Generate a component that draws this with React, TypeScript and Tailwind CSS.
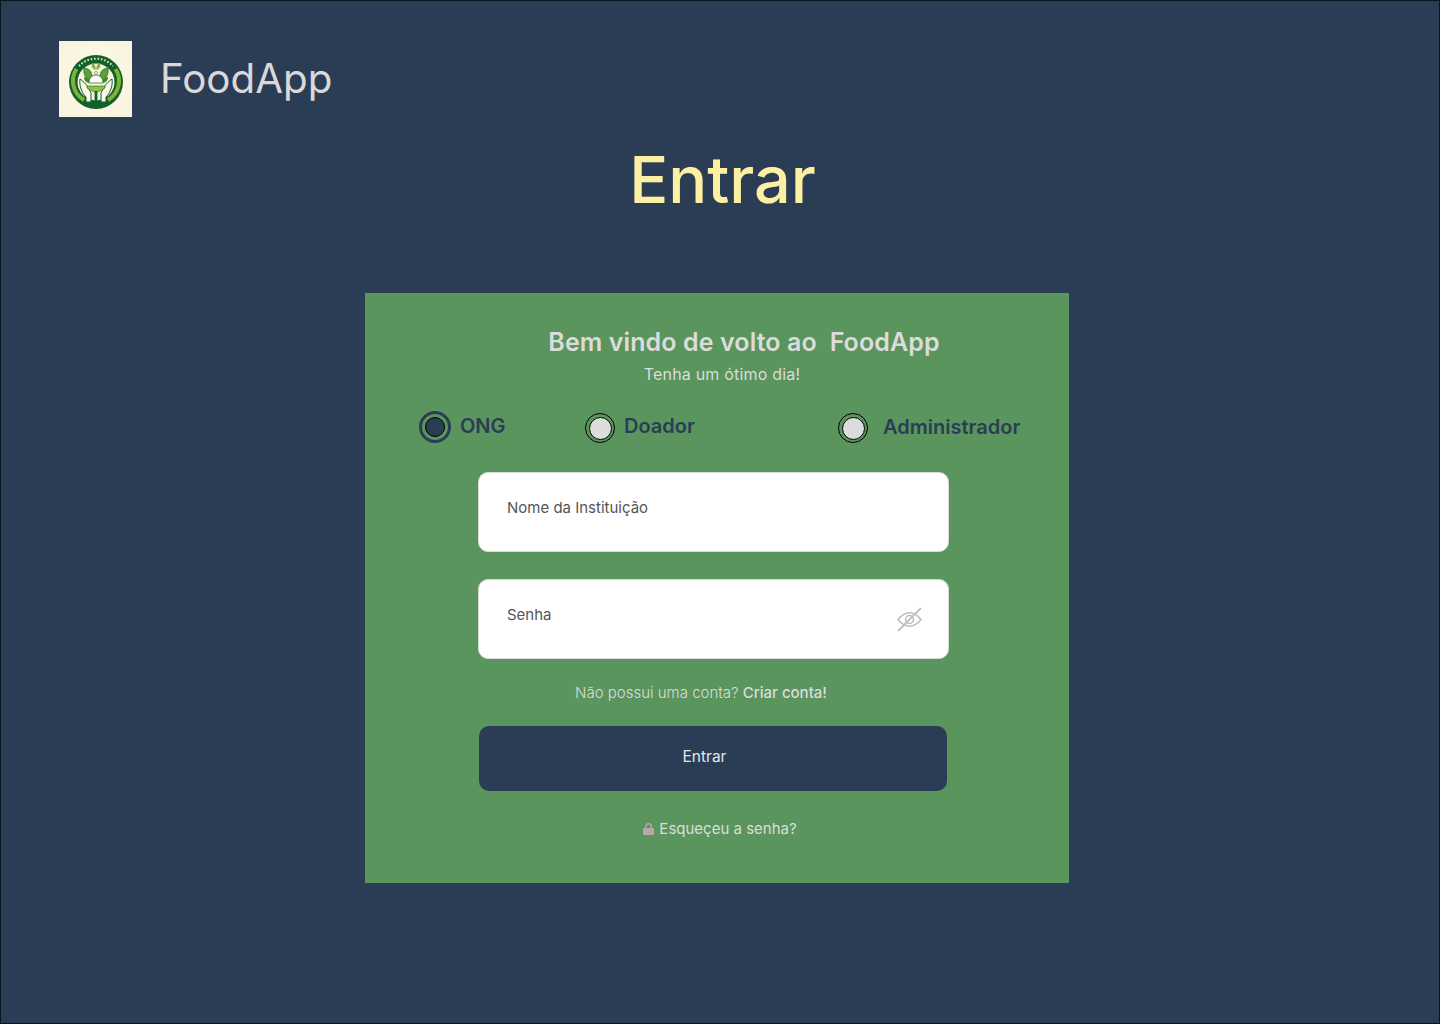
const font = { body: "font-['Inter',sans-serif]" };

function Logo() {
  return (
    <div className="flex h-[76px] w-[73px] shrink-0 items-center justify-center bg-[radial-gradient(circle,#fdfaea,#f8f3db)] pt-[5px]">
      <svg width="54" height="54" viewBox="0 0 54 54">
        <circle cx="27" cy="27" r="27" fill="#12602c" />
        <path d="M10 11 A23.3 23.3 0 0 1 44 11" fill="none" stroke="#e8e6c0" strokeWidth="2" strokeDasharray="1.6 1.8" />
        <path d="M7.5 14 A22 22 0 0 0 15 45" fill="none" stroke="#7fb239" strokeWidth="4" />
        <path d="M46.5 14 A22 22 0 0 1 39 45" fill="none" stroke="#7fb239" strokeWidth="4" />
        <circle cx="27" cy="27" r="18.5" fill="#f7f5de" />
        <path d="M15 13 C21 13 24 18 23 25 C17 25 14 20 15 13 Z" fill="#5f9f33" stroke="#12602c" strokeWidth="0.6" />
        <path d="M39 13 C33 13 30 18 31 25 C37 25 40 20 39 13 Z" fill="#5f9f33" stroke="#12602c" strokeWidth="0.6" />
        <path d="M23 8 C26 9 27 12 26.5 15 C23.5 14 22 11 23 8 Z" fill="#7fb239" />
        <path d="M31 8 C28 9 27 12 27.5 15 C30.5 14 32 11 31 8 Z" fill="#7fb239" />
        <path d="M15 22 C19 22 21 25 21 28 C17 28 15 25 15 22 Z" fill="#3f8a2c" />
        <path d="M39 22 C35 22 33 25 33 28 C37 28 39 25 39 22 Z" fill="#3f8a2c" />
        <path d="M20 27 A7 7 0 0 1 34 27 L34 28 H20 Z" fill="#fffef4" stroke="#12602c" strokeWidth="0.7" />
        <rect x="25.5" y="16.5" width="3" height="3" rx="1.5" fill="#fffef4" stroke="#12602c" strokeWidth="0.5" />
        <path d="M11 24 C14 26 17 29 19 32 L22 38 L22 47 L17 47 L17 42 C13 38 10 31 11 24 Z" fill="#fbf8e6" stroke="#12602c" strokeWidth="1" />
        <path d="M43 24 C40 26 37 29 35 32 L32 38 L32 47 L37 47 L37 42 C41 38 44 31 43 24 Z" fill="#fbf8e6" stroke="#12602c" strokeWidth="1" />
        <path d="M18 31 H36 L36 33 L29 37 H25 L18 33 Z" fill="#8cc63f" stroke="#12602c" strokeWidth="0.6" />
        <rect x="25.6" y="36" width="2.8" height="13" fill="#12602c" />
      </svg>
    </div>
  );
}

function Radio({ checked, label, labelClass, className }: { checked?: boolean; label: string; labelClass: string; className: string }) {
  return (
    <label className={`flex items-center ${className}`}>
      {checked ? (
        <span className="flex h-8 w-8 items-center justify-center rounded-full border-[3px] border-[#2b3d55]">
          <span className="h-5 w-5 rounded-full border border-black bg-[#2b3d55]" />
        </span>
      ) : (
        <span className="flex h-[30px] w-[30px] items-center justify-center rounded-full border border-black">
          <span className="h-[23px] w-[23px] rounded-full border border-black bg-[#dcdcdc]" />
        </span>
      )}
      <span className={`leading-none font-semibold text-[#2b3d55] ${labelClass}`}>{label}</span>
    </label>
  );
}

export default function App() {
  return (
    <div className={`${font.body} h-[1024px] w-full overflow-hidden border border-[#0c1420] bg-[#2b3d55]`}>
      <header className="flex items-center pl-[58px] pt-[40px]">
        <Logo />
        <span className="ml-[28px] text-[40.3px] leading-none text-[#d9d9d9]">FoodApp</span>
      </header>

      <h1 className="mt-[25px] pl-[5px] text-center text-[64.8px] font-medium leading-[76px] text-[#fdf0a2]">Entrar</h1>

      <main className="ml-[364px] mt-[75px] h-[590px] w-[704px] bg-[#59955d] pt-[34px]">
        <h2 className="pl-[54px] text-center text-[25px] font-semibold leading-[30px] tracking-[0.1px] text-[#dcdcdc]">Bem vindo de volto ao&nbsp; FoodApp</h2>
        <p className="mt-[8px] pl-[10px] text-center text-[16px] leading-[18px] tracking-[0.2px] text-[#dcdcdc]">Tenha um ótimo dia!</p>

        <div className="mt-[28px] flex items-start pl-[54px]">
          <Radio checked label="ONG" labelClass="ml-[9px] mb-[2px] text-[20px]" className="w-[166px]" />
          <Radio label="Doador" labelClass="ml-[9px] mb-[4px] text-[20px]" className="mt-[2px] w-[253px]" />
          <Radio label="Administrador" labelClass="ml-[15px] mb-[2px] text-[20px]" className="mt-[2px]" />
        </div>

        <div className="ml-[113px] mt-[29px] w-[471px]">
          <div className="h-[80px] rounded-[10px] border border-[#d9d9d9] bg-white pl-[28px] pt-[26px] text-[15px] leading-[18px] text-[#555]">Nome da Instituição</div>
          <div className="relative mt-[27px] h-[80px] rounded-[10px] border border-[#d9d9d9] bg-white pl-[28px] pt-[26px] text-[15px] leading-[18px] text-[#555]">
            Senha
            <svg className="absolute right-[26px] top-[27px]" width="25" height="25" viewBox="0 0 24 24" fill="none" stroke="#bdbdbd" strokeWidth="1.5" strokeLinecap="round">
              <path d="M1 12 C5 7 8.5 5.5 12 5.5 C15.5 5.5 19 7 23 12 C19 17 15.5 18.5 12 18.5 C8.5 18.5 5 17 1 12 Z" />
              <circle cx="12" cy="12" r="3.8" />
              <path d="M22.5 1.5 L1.5 22.5" strokeWidth="1.8" />
            </svg>
          </div>
          <p className="mt-[25px] pr-[25px] text-center text-[15px] leading-[18px] font-light text-[#dcdcdc]">
            Não possui uma conta? <span className="font-medium">Criar conta!</span>
          </p>
          <button className="ml-px mt-[24px] flex h-[65px] w-[468px] items-center justify-center rounded-[10px] bg-[#2b3d55] pb-[3px] pr-[17px] text-[15.5px] text-[#e5e5e5]">Entrar</button>
          <p className="mt-[29px] flex items-center justify-center pl-[13px] text-[15px] leading-[18px] text-[#dcdcdc]">
            <svg className="mr-[5px]" width="11" height="12" viewBox="0 0 11 12" fill="#b8a8a8">
              <path d="M2 5 V3.5 A3.5 3.5 0 0 1 9 3.5 V5 H10 A1 1 0 0 1 11 6 V11 A1 1 0 0 1 10 12 H1 A1 1 0 0 1 0 11 V6 A1 1 0 0 1 1 5 Z M3.5 5 H7.5 V3.5 A2 2 0 0 0 3.5 3.5 Z" fillRule="evenodd" />
            </svg>
            Esqueçeu a senha?
          </p>
        </div>
      </main>
    </div>
  );
}
